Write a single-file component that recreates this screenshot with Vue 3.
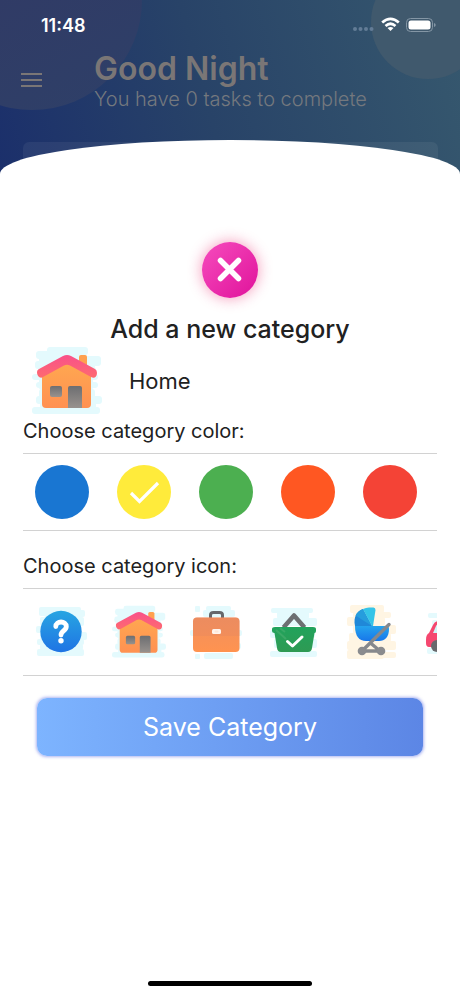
<script setup>
import { ref } from 'vue'

const name = ref('Home')
const color = ref('Yellow')
const icon = ref('home')

const colors = [
  { name: 'Blue', value: '#1976d2' },
  { name: 'Yellow', value: '#ffeb3b' },
  { name: 'Green', value: '#4caf50' },
  { name: 'Orange', value: '#ff5722' },
  { name: 'Red', value: '#f44336' }
]
const icons = ['question', 'home', 'briefcase', 'basket', 'stroller', 'car']
</script>

<template>
  <div class="screen">
    <svg class="defs" width="0" height="0" aria-hidden="true">
      <defs>
        <linearGradient id="g-roof" x1="0" y1="0" x2="0" y2="1">
          <stop offset="0" stop-color="#f9518a" />
          <stop offset="1" stop-color="#fe6a70" />
        </linearGradient>
        <linearGradient id="g-wall" x1="0" y1="0" x2="0" y2="1">
          <stop offset="0" stop-color="#ffa850" />
          <stop offset="1" stop-color="#ff9152" />
        </linearGradient>
        <linearGradient id="g-door" x1="0" y1="0" x2="0" y2="1">
          <stop offset="0" stop-color="#6d6e71" />
          <stop offset="1" stop-color="#98928e" />
        </linearGradient>
        <linearGradient id="g-blue" x1="0" y1="0" x2="0" y2="1">
          <stop offset="0" stop-color="#27a5e2" />
          <stop offset="1" stop-color="#1f74e4" />
        </linearGradient>
        <linearGradient id="g-case" x1="0" y1="0" x2="0" y2="1">
          <stop offset="0" stop-color="#f0905f" />
          <stop offset="1" stop-color="#ff9350" />
        </linearGradient>
        <linearGradient id="g-green" x1="0" y1="0" x2="0" y2="1">
          <stop offset="0" stop-color="#21a35c" />
          <stop offset="1" stop-color="#2e9a53" />
        </linearGradient>
        <linearGradient id="g-pram" x1="0" y1="0" x2="0" y2="1">
          <stop offset="0" stop-color="#25a4ee" />
          <stop offset="1" stop-color="#1877ea" />
        </linearGradient>
      </defs>

      <symbol id="icon-home" viewBox="0 0 70 68">
        <g fill="#e4fafd">
          <rect x="15" y="0" width="41" height="8" rx="3" />
          <rect x="4" y="4" width="50" height="8" rx="3" />
          <rect x="7" y="9" width="62" height="10" rx="3" />
          <rect x="3" y="14" width="60" height="8" rx="3" />
          <rect x="6" y="20" width="58" height="12" rx="3" />
          <rect x="0" y="27" width="66" height="6" rx="3" />
          <rect x="7" y="31" width="54" height="12" rx="3" />
          <rect x="4" y="35" width="62" height="6" rx="3" />
          <rect x="7" y="42" width="56" height="9" rx="3" />
          <rect x="4" y="49" width="66" height="8" rx="3" />
          <rect x="8" y="55" width="56" height="8" rx="3" />
          <rect x="0" y="60" width="68" height="7" rx="3" />
        </g>
        <rect x="47" y="8" width="8" height="18" rx="2" fill="#ffa04f" />
        <path d="M10 28 L35 14 L59 28 V57 Q59 61 55 61 H14 Q10 61 10 57Z" fill="url(#g-wall)" />
        <path d="M5 25 Q5 23 7 22 L31 9 Q35 7 39 9 L63 22 Q65 23 65 26 C65 30 62 32 59 30 L38 18.500 Q35 17 32 18.500 L11 30 C8 32 5 29 5 25Z" fill="url(#g-roof)" />
        <rect x="18" y="39" width="12" height="11" rx="2" fill="url(#g-door)" />
        <path d="M36 61 V41 Q36 39 38 39 H48 Q50 39 50 41 V61Z" fill="url(#g-door)" />
      </symbol>

      <symbol id="icon-question" viewBox="0 0 54 54">
        <g fill="#e4fafd">
          <rect x="4" y="2" width="42" height="9" rx="2" />
          <rect x="9" y="5" width="41" height="7" rx="2" />
          <rect x="5" y="12" width="44" height="9" rx="2" />
          <rect x="1" y="21" width="45" height="7" rx="2" />
          <rect x="5" y="27" width="47" height="8" rx="2" />
          <rect x="2" y="34" width="47" height="6" rx="2" />
          <rect x="5" y="39" width="43" height="6" rx="2" />
          <rect x="2" y="44" width="47" height="7" rx="2" />
        </g>
        <circle cx="26" cy="26.500" r="20.700" fill="url(#g-blue)" />
        <path d="M20.800 21.500 C20.800 15.500 31.300 15.500 31.300 21.500 C31.300 26 26 25.500 26 30" fill="none" stroke="#fff" stroke-width="4.800" stroke-linecap="round" stroke-linejoin="round" />
        <circle cx="26" cy="35.700" r="2.700" fill="#fff" />
      </symbol>

      <symbol id="icon-briefcase" viewBox="0 0 54 54">
        <g fill="#e4fafd">
          <rect x="6" y="1" width="5" height="6" rx="1" />
          <rect x="17" y="1" width="25" height="5" rx="2" />
          <rect x="14" y="5" width="32" height="7" rx="2" />
          <rect x="1" y="25" width="52" height="6" rx="2" />
          <rect x="5" y="38" width="47" height="6" rx="2" />
          <rect x="6" y="49" width="5" height="5" rx="1" />
          <rect x="15" y="48" width="29" height="6" rx="2" />
        </g>
        <path d="M21.500 13 V10 Q21.500 7.500 24.500 7.500 H30.500 Q33.500 7.500 33.500 10 V13" fill="none" stroke="#66686c" stroke-width="3" />
        <rect x="4" y="12.500" width="46.500" height="34.500" rx="4" fill="url(#g-case)" />
        <path d="M4 31 H50.500 V16.500 Q50.500 12.500 46.500 12.500 H8 Q4 12.500 4 16.500Z" fill="#e68862" opacity=".35" />
        <rect x="23" y="24" width="9" height="5" rx="1.500" fill="#fff4ec" />
        <rect x="25.500" y="25.500" width="4" height="2" rx="1" fill="#ffe6d6" />
      </symbol>

      <symbol id="icon-basket" viewBox="0 0 54 54">
        <g fill="#e4fafd">
          <rect x="5" y="3" width="42" height="5" rx="2" />
          <rect x="11" y="6" width="32" height="8" rx="2" />
          <rect x="7" y="13" width="44" height="8" rx="2" />
          <rect x="4" y="25" width="45" height="8" rx="2" />
          <rect x="8" y="34" width="43" height="9" rx="2" />
          <rect x="4" y="46" width="47" height="6" rx="2" />
        </g>
        <path d="M17.500 22.500 L28 10.500 L38.500 22.500" fill="none" stroke="#6d6f72" stroke-width="4.500" stroke-linejoin="round" />
        <path d="M9 22 H47 Q50 22 50 24 V26 Q50 28 48.500 28 L46 43 Q45.500 47 42 47 H15 Q11.500 47 11 43 L8.500 28 Q6 28 6 26 V24 Q6 22 9 22Z" fill="url(#g-green)" />
        <path d="M10 25 L20 34 M14 23 L19 27" stroke="#64ba80" stroke-width="2" opacity=".35" />
        <path d="M21.500 36.500 L26.500 41 L36 32" fill="none" stroke="#fff" stroke-width="3" stroke-linecap="round" stroke-linejoin="round" />
      </symbol>

      <symbol id="icon-stroller" viewBox="0 0 54 54">
        <g fill="#fff5e3">
          <rect x="7" y="0" width="34" height="8" rx="2" />
          <rect x="10" y="7" width="38" height="6" rx="2" />
          <rect x="4" y="12" width="38" height="9" rx="2" />
          <rect x="10" y="20" width="43" height="9" rx="2" />
          <rect x="6" y="28" width="42" height="9" rx="2" />
          <rect x="4" y="36" width="49" height="9" rx="2" />
          <rect x="4" y="45" width="37" height="9" rx="2" />
          <rect x="39" y="47" width="14" height="6" rx="2" />
        </g>
        <path d="M12 21 H44 Q46 21 46 24 C46 32 42 36 36 36 H23 C16 36 12 31 12 21Z" fill="url(#g-pram)" />
        <path d="M12 21 C10 12 14 6 20 4 L29 21Z" fill="#2088d8" />
        <path d="M12.500 10.500 Q15 5.500 20 4 L29 21Z" fill="#269ddd" />
        <path d="M20 4 Q23 2.500 26 2.500 H30.500 Q32.500 2.500 32.500 5 L30 21 H29Z" fill="#35c4e8" />
        <path d="M46 19.500 L19 46 M27.500 38 L37 46 M19 46 H38" fill="none" stroke="#86888c" stroke-width="3.400" stroke-linecap="round" />
        <circle cx="19" cy="46" r="4.300" fill="#8a8b8e" />
        <circle cx="38" cy="46" r="4.300" fill="#8a8b8e" />
      </symbol>

      <symbol id="icon-car" viewBox="0 0 54 54">
        <g fill="#e4fafd">
          <rect x="8" y="8" width="38" height="5" rx="2" />
          <rect x="12" y="15" width="34" height="8" rx="2" />
          <rect x="7" y="43" width="40" height="6" rx="2" />
        </g>
        <path d="M6 35 C6 31 7 29 9 28 L13 20 Q15 16 19 16 H35 Q39 16 41 20 L45 28 Q49 30 49 35 V39 Q49 42 46 42 H9 Q6 42 6 38Z" fill="#f5476f" />
        <path d="M13 28 L16 21 Q17 19 20 19 H26 V28Z" fill="#cdf4f8" />
        <circle cx="17" cy="41" r="6" fill="#68696d" />
        <circle cx="39" cy="41" r="6" fill="#68696d" />
      </symbol>
    </svg>

    <header class="header">
      <div class="bubble bubble-left"></div>
      <div class="bubble bubble-right"></div>
      <div class="status">
        <span class="time">11:48</span>
        <svg class="signals" viewBox="0 0 84 18" width="84" height="18" aria-hidden="true">
          <g fill="#637c96">
            <circle cx="3" cy="13" r="2" /><circle cx="8.500" cy="13" r="2" />
            <circle cx="14" cy="13" r="2" /><circle cx="19.500" cy="13" r="2" />
          </g>
          <g fill="none" stroke="#fff" stroke-width="2.700">
            <path d="M30.200 6.500 Q38.500 -.8 46.800 6.500" />
            <path d="M33.500 9.900 Q38.500 5.600 43.500 9.900" />
          </g>
          <path d="M35.500 12 Q38.500 9.800 41.500 12 L38.500 15Z" fill="#fff" />
          <rect x="54.500" y="2.500" width="26" height="13" rx="4" fill="none" stroke="#8496a5" />
          <rect x="56.500" y="4.500" width="22" height="9" rx="2.500" fill="#fff" />
          <path d="M82 7 Q83.700 7.500 83.700 9 T82 11Z" fill="#8496a5" />
        </svg>
      </div>
      <div class="greeting">
        <button class="menu" type="button" aria-label="Menu">
          <span></span><span></span><span></span>
        </button>
        <div>
          <h1>Good Night</h1>
          <p>You have 0 tasks to complete</p>
        </div>
      </div>
      <div class="card"></div>
    </header>

    <main class="sheet">
      <form class="form" @submit.prevent>
        <button class="close" type="button" aria-label="Close">
          <svg viewBox="0 0 56 56" width="56" height="56" aria-hidden="true">
            <path d="M18.500 18.500 L36.500 36.500 M36.500 18.500 L18.500 36.500" stroke="#fff" stroke-width="5.500" stroke-linecap="round" />
          </svg>
        </button>
        <h2>Add a new category</h2>
        <div class="name-row">
          <svg width="70" height="68" aria-hidden="true"><use :href="'#icon-' + icon" /></svg>
          <input v-model="name" class="name" type="text" aria-label="Category name" />
        </div>

        <fieldset>
          <legend>Choose category color:</legend>
          <div class="strip colors">
            <label v-for="c in colors" :key="c.name" class="option">
              <input v-model="color" type="radio" name="color" :value="c.name" :aria-label="c.name" :style="{ backgroundColor: c.value }" />
              <svg v-if="color === c.name" viewBox="0 0 54 54" width="54" height="54" aria-hidden="true">
                <path d="M14 28 L22.500 36.500 L41 18" fill="none" stroke="#fff" stroke-width="3.200" />
              </svg>
            </label>
          </div>
        </fieldset>

        <fieldset class="icon-set">
          <legend>Choose category icon:</legend>
          <div class="strip icons">
            <label v-for="i in icons" :key="i" class="option">
              <input v-model="icon" type="radio" name="icon" :value="i" :aria-label="i" />
              <svg width="54" height="54" aria-hidden="true"><use :href="'#icon-' + i" /></svg>
            </label>
          </div>
        </fieldset>

        <button class="save" type="submit">Save Category</button>
      </form>
      <div class="home-bar"></div>
    </main>
  </div>
</template>

<style>
body {
  margin: 0;
}
</style>

<style scoped>
* {
  box-sizing: border-box;
}
.screen {
  display: flex;
  flex-direction: column;
  min-height: 100vh;
  font-family: Inter, "Liberation Sans", sans-serif;
  color: #212121;
  background: #fff;
}
.defs {
  position: absolute;
}
.header {
  position: relative;
  overflow: hidden;
  background: linear-gradient(75deg, #1b2f6b 0%, #284368 45%, #36586e 100%);
}
.bubble {
  position: absolute;
  border-radius: 50%;
}
.bubble-left {
  left: -78px;
  top: -110px;
  width: 220px;
  height: 220px;
  background: linear-gradient(150deg, #323764, #2e4068);
}
.bubble-right {
  right: -25px;
  top: -35px;
  width: 114px;
  height: 114px;
  background: #40596d;
}
.status {
  position: relative;
  display: flex;
  align-items: center;
  justify-content: space-between;
  height: 50px;
  padding: 0 24px 0 41px;
}
.time {
  font-size: 18px;
  font-weight: 600;
  color: #fff;
}
.greeting {
  position: relative;
  display: flex;
  align-items: center;
  gap: 52px;
  height: 60px;
  padding-left: 21px;
}
.menu {
  display: flex;
  flex-direction: column;
  gap: 4px;
  width: 21px;
  padding: 0;
  border: 0;
  background: none;
}
.menu span {
  height: 2px;
  background: #7a7676;
}
h1,
h2,
p {
  margin: 0;
}
h1 {
  font-size: 32px;
  line-height: 38px;
  font-weight: 600;
  color: #7a7676;
}
p {
  font-size: 20px;
  line-height: 22px;
  font-weight: 300;
  color: #74787e;
}
.card {
  height: 46px;
  margin: 32px 22px 0 23px;
  border-radius: 6px;
  background: rgba(255, 255, 255, 0.06);
}
.sheet {
  position: relative;
  flex: 1;
  display: flex;
  flex-direction: column;
  margin-top: -48px;
  padding: 102px 0 10px;
  border-radius: 50% 50% 0 0 / 34px 34px 0 0;
  background: #fff;
}
.form {
  display: flex;
  flex-direction: column;
  padding: 0 23px;
}
.close {
  align-self: center;
  width: 56px;
  height: 56px;
  padding: 0;
  border: 0;
  border-radius: 50%;
  background: linear-gradient(135deg, #f64cbd, #e0129b);
  box-shadow: 0 0 14px 1px rgba(233, 30, 99, 0.4);
}
.close svg {
  display: block;
}
h2 {
  margin-top: 16px;
  font-size: 25px;
  line-height: 30px;
  font-weight: 500;
  text-align: center;
}
.name-row {
  display: flex;
  align-items: center;
  gap: 27px;
  margin-top: 3px;
  padding-left: 9px;
}
.name {
  flex: 1;
  min-width: 0;
  padding: 0;
  border: 0;
  outline: 0;
  background: none;
  font: 400 22px/28px Inter, "Liberation Sans", sans-serif;
  color: #212121;
}
fieldset {
  min-width: 0;
  margin: 4px 0 0;
  padding: 0;
  border: 0;
}
.icon-set {
  margin-top: 23px;
}
legend {
  padding: 0;
  font-size: 20px;
  line-height: 24px;
}
.strip {
  display: flex;
  margin-top: 10px;
  overflow: hidden;
  border-top: 1px solid #d2d2d2;
  border-bottom: 1px solid #d2d2d2;
}
.colors {
  gap: 28px;
  padding: 11px 12px;
}
.icons {
  gap: 23px;
  padding: 16px 12px;
}
.option {
  display: grid;
  flex: none;
}
.option > * {
  grid-area: 1 / 1;
}
.option input {
  appearance: none;
  width: 54px;
  height: 54px;
  margin: 0;
  border-radius: 50%;
}
.icons input {
  border-radius: 0;
}
.option svg {
  pointer-events: none;
}
.save {
  height: 58px;
  margin: 22px 14px 0;
  padding: 0;
  border: 0;
  border-radius: 10px;
  font: 400 25px/30px Inter, "Liberation Sans", sans-serif;
  color: #fff;
  background: linear-gradient(90deg, #7db4ff, #5c86e5);
  box-shadow: 0 0 3px 1px rgba(92, 107, 229, 0.5);
}
.home-bar {
  align-self: center;
  width: 164px;
  height: 5px;
  margin-top: auto;
  border-radius: 3px;
  background: #000;
}
</style>
